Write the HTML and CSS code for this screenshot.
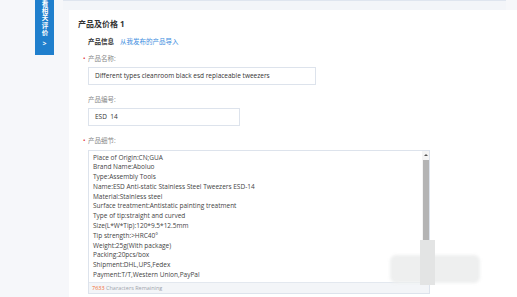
FILE: index.html
```html
<!DOCTYPE html>
<html lang="zh-CN">
<head>
    <meta charset="utf-8">
    <title>产品及价格</title>
    <link rel="stylesheet" href="styles.css">
</head>
<body>
<div class="rail">
    <div class="tab">
        <div class="tab-text">看相关评价</div>
        <div class="tab-arrow">&gt;</div>
    </div>
</div>
<div class="main">
    <div class="strip"></div>
    <div class="card">
        <h2 class="title">产品及价格 1</h2>
        <div class="form">
            <div class="info-row">
                <b>产品信息</b>
                <a href="#">从我发布的产品导入</a>
            </div>

            <label class="label req first">产品名称:</label>
            <div class="input wide">Different types cleanroom black esd replaceable tweezers</div>

            <label class="label">产品编号:</label>
            <div class="input narrow">ESD&nbsp; 14</div>

            <label class="label req">产品细节:</label>
            <div class="details">
                <div class="details-body">
                    <div class="lines">
                        <p>Place of Origin:CN;GUA</p>
                        <p>Brand Name:Aboluo</p>
                        <p>Type:Assembly Tools</p>
                        <p>Name:ESD Anti-static Stainless Steel Tweezers ESD-14</p>
                        <p>Material:Stainless steel</p>
                        <p>Surface treatment:Antistatic painting treatment</p>
                        <p>Type of tip:straight and curved</p>
                        <p>Size(L*W*Tip):120*9.5*12.5mm</p>
                        <p>Tip strength:&gt;HRC40°</p>
                        <p>Weight:25g(With package)</p>
                        <p>Packing:20pcs/box</p>
                        <p>Shipment:DHL,UPS,Fedex</p>
                        <p>Payment:T/T,Western Union,PayPal</p>
                    </div>
                    <div class="scrollbar">
                        <span class="scroll-up"></span>
                        <span class="scroll-thumb"></span>
                    </div>
                </div>
                <div class="details-foot"><span class="count">7633</span> Characters Remaining</div>
            </div>
        </div>
        <div class="smudge">
            <span class="smudge-b"></span>
            <span class="smudge-a"></span>
        </div>
    </div>
</div>
</body>
</html>
```

FILE: styles.css
```css
body {
    display: flex;
    margin: 0;
    height: 297px;
    overflow: hidden;
    background: #f6f7fa;
    font-family: "Open Sans", "Noto Sans CJK SC", sans-serif;
    color: #444;
}
.rail {
    width: 63px;
    flex-shrink: 0;
    padding-left: 35px;
    box-sizing: border-box;
}
.tab {
    width: 19px;
    height: 55px;
    background: #1f7fcd;
    color: #fff;
    overflow: hidden;
}
.tab-text {
    height: 39px;
    margin: 0 auto;
    writing-mode: vertical-rl;
    text-orientation: upright;
    font-family: "Noto Sans CJK SC", sans-serif;
    font-size: 6.5px;
    line-height: 19px;
    letter-spacing: 0.8px;
    font-weight: bold;
}
.tab-text,
.tab-arrow {
    display: block;
}
.tab-arrow {
    text-align: center;
    font-size: 7px;
    font-weight: bold;
    line-height: 10px;
}
.main {
    flex: 1;
    display: flex;
    flex-direction: column;
}
.strip {
    width: 443px;
    height: 9px;
    background: #f3f5f9;
    border-top: 1px solid #dfe5ef;
}
.card {
    flex: 1;
    margin-left: 6px;
    background: #fff;
    padding: 9px 0 0 9px;
    position: relative;
}
.title {
    margin: 0;
    font-size: 8px;
    line-height: 10px;
    font-weight: bold;
    color: #333;
}
.form {
    padding-left: 10px;
}
.info-row {
    margin-top: 8px;
    font-size: 6.5px;
    line-height: 9px;
    display: flex;
    gap: 6px;
}
.info-row b {
    color: #333;
}
.info-row a {
    color: #3d8ee0;
    text-decoration: none;
}
.label {
    display: block;
    font-size: 6.5px;
    line-height: 9px;
    color: #8a8a8a;
    margin-top: 10px;
    margin-bottom: 4.5px;
    position: relative;
}
.label.first {
    margin-top: 8px;
    margin-bottom: 3.5px;
}
.label.req::before {
    content: "•";
    color: #e4393c;
    position: absolute;
    left: -5px;
    top: 0;
}
.input {
    box-sizing: border-box;
    height: 18px;
    border: 1px solid #dde3ec;
    padding: 0 6px;
    font-size: 6.5px;
    line-height: 16px;
    color: #333;
}
.wide {
    width: 228px;
}
.narrow {
    width: 152px;
}
.details {
    width: 342px;
    box-sizing: border-box;
    border: 1px solid #dde3ec;
}
.details-body {
    display: flex;
    height: 131px;
}
.lines {
    flex: 1;
    padding: 2px 0 0 4px;
}
.lines p {
    margin: 0;
    font-size: 6.5px;
    line-height: 9.8px;
    color: #444;
}
.scrollbar {
    width: 7px;
    display: flex;
    flex-direction: column;
    align-items: center;
    background: #f4f4f4;
}
.scroll-up {
    margin-top: 3px;
    width: 0;
    height: 0;
    border-left: 2px solid transparent;
    border-right: 2px solid transparent;
    border-bottom: 2px solid #555;
}
.scroll-thumb {
    margin-top: 4px;
    width: 6px;
    height: 85px;
    background: #b4b4b4;
}
.details-foot {
    height: 10px;
    background: #f3f5f8;
    border-top: 1px solid #e3e8ef;
    font-size: 5.5px;
    line-height: 10px;
    padding-left: 3px;
    color: #a0a4ab;
}
.count {
    color: #f26a2e;
}
.smudge {
    position: absolute;
    left: 306px;
    top: 230px;
    width: 100px;
    height: 50px;
}
.smudge-a {
    position: absolute;
    left: 45px;
    top: 0;
    width: 15px;
    height: 45px;
    background: #e3e4e4;
}
.smudge-b {
    position: absolute;
    left: 15px;
    top: 15px;
    width: 90px;
    height: 28px;
    background: #eeefef;
    border-radius: 6px;
    filter: blur(1.5px);
}
```
